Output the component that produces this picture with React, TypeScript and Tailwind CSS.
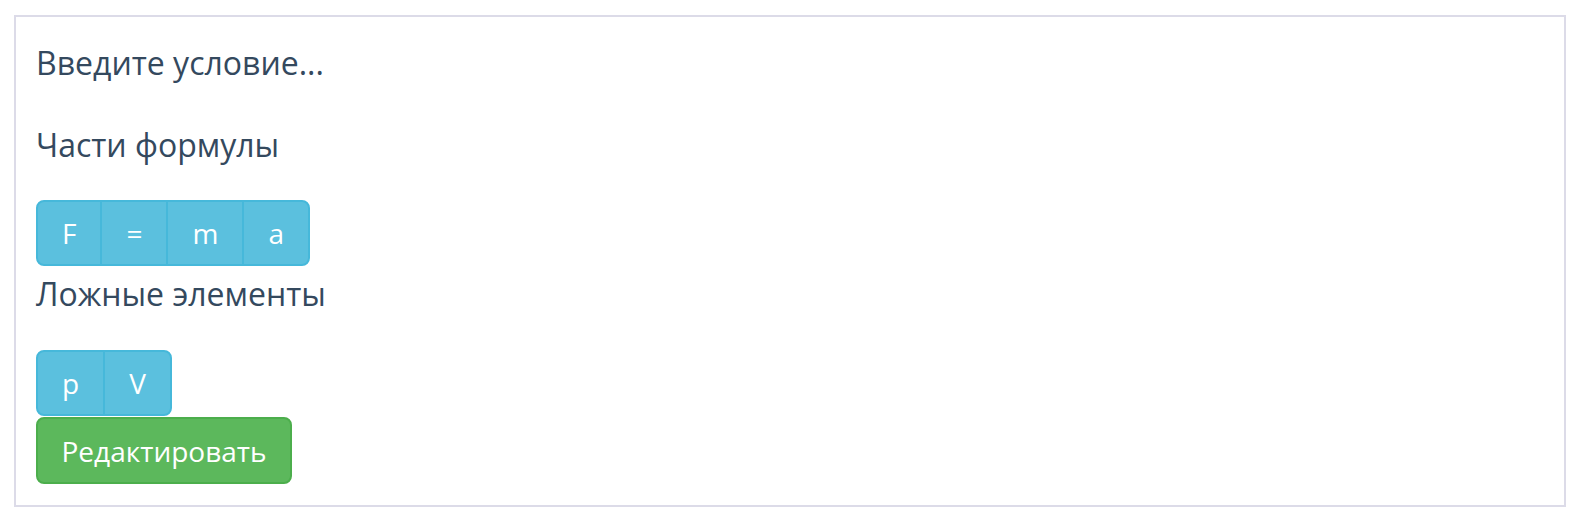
import React from "react";

const font = { fontFamily: '"Open Sans", "Noto Sans", sans-serif' };

function Group({ items }: { items: string[] }) {
  return (
    <div className="flex self-start">
      {items.map((t, i) => (
        <button
          key={i}
          className={
            "h-[66px] px-[24px] border-2 border-[#46b8da] bg-[#5bc0de] text-white text-[28px] leading-[40px] font-medium " +
            (i === 0 ? "rounded-l-[8px] " : "-ml-[2px] ") +
            (i === items.length - 1 ? "rounded-r-[8px]" : "")
          }
        >
          {t}
        </button>
      ))}
    </div>
  );
}

export default function App() {
  return (
    <div className="bg-white w-[1579px] h-[521px] pt-[15px] pl-[14px] pr-[13px]" style={font}>
      <div className="border-2 border-[#dcdbe8] pl-[20px] pt-[26px] pb-[21px] flex flex-col text-[#34495e]">
        <p className="text-[32px] leading-[40px] h-[40px]">Введите условие...</p>
        <p className="mt-[42px] text-[32px] leading-[40px] h-[40px]">Части формулы</p>
        <div className="mt-[35px] flex">
          <Group items={["F", "=", "m", "a"]} />
        </div>
        <p className="mt-[8px] text-[32px] leading-[40px] h-[40px]">Ложные элементы</p>
        <div className="mt-[36px] flex">
          <Group items={["p", "V"]} />
        </div>
        <div className="mt-[1px] flex">
          <button className="h-[67px] w-[256px] border-2 border-[#4cae4c] bg-[#5cb85c] rounded-[8px] text-white text-[28px] leading-[40px] font-medium">
            Редактировать
          </button>
        </div>
      </div>
    </div>
  );
}
